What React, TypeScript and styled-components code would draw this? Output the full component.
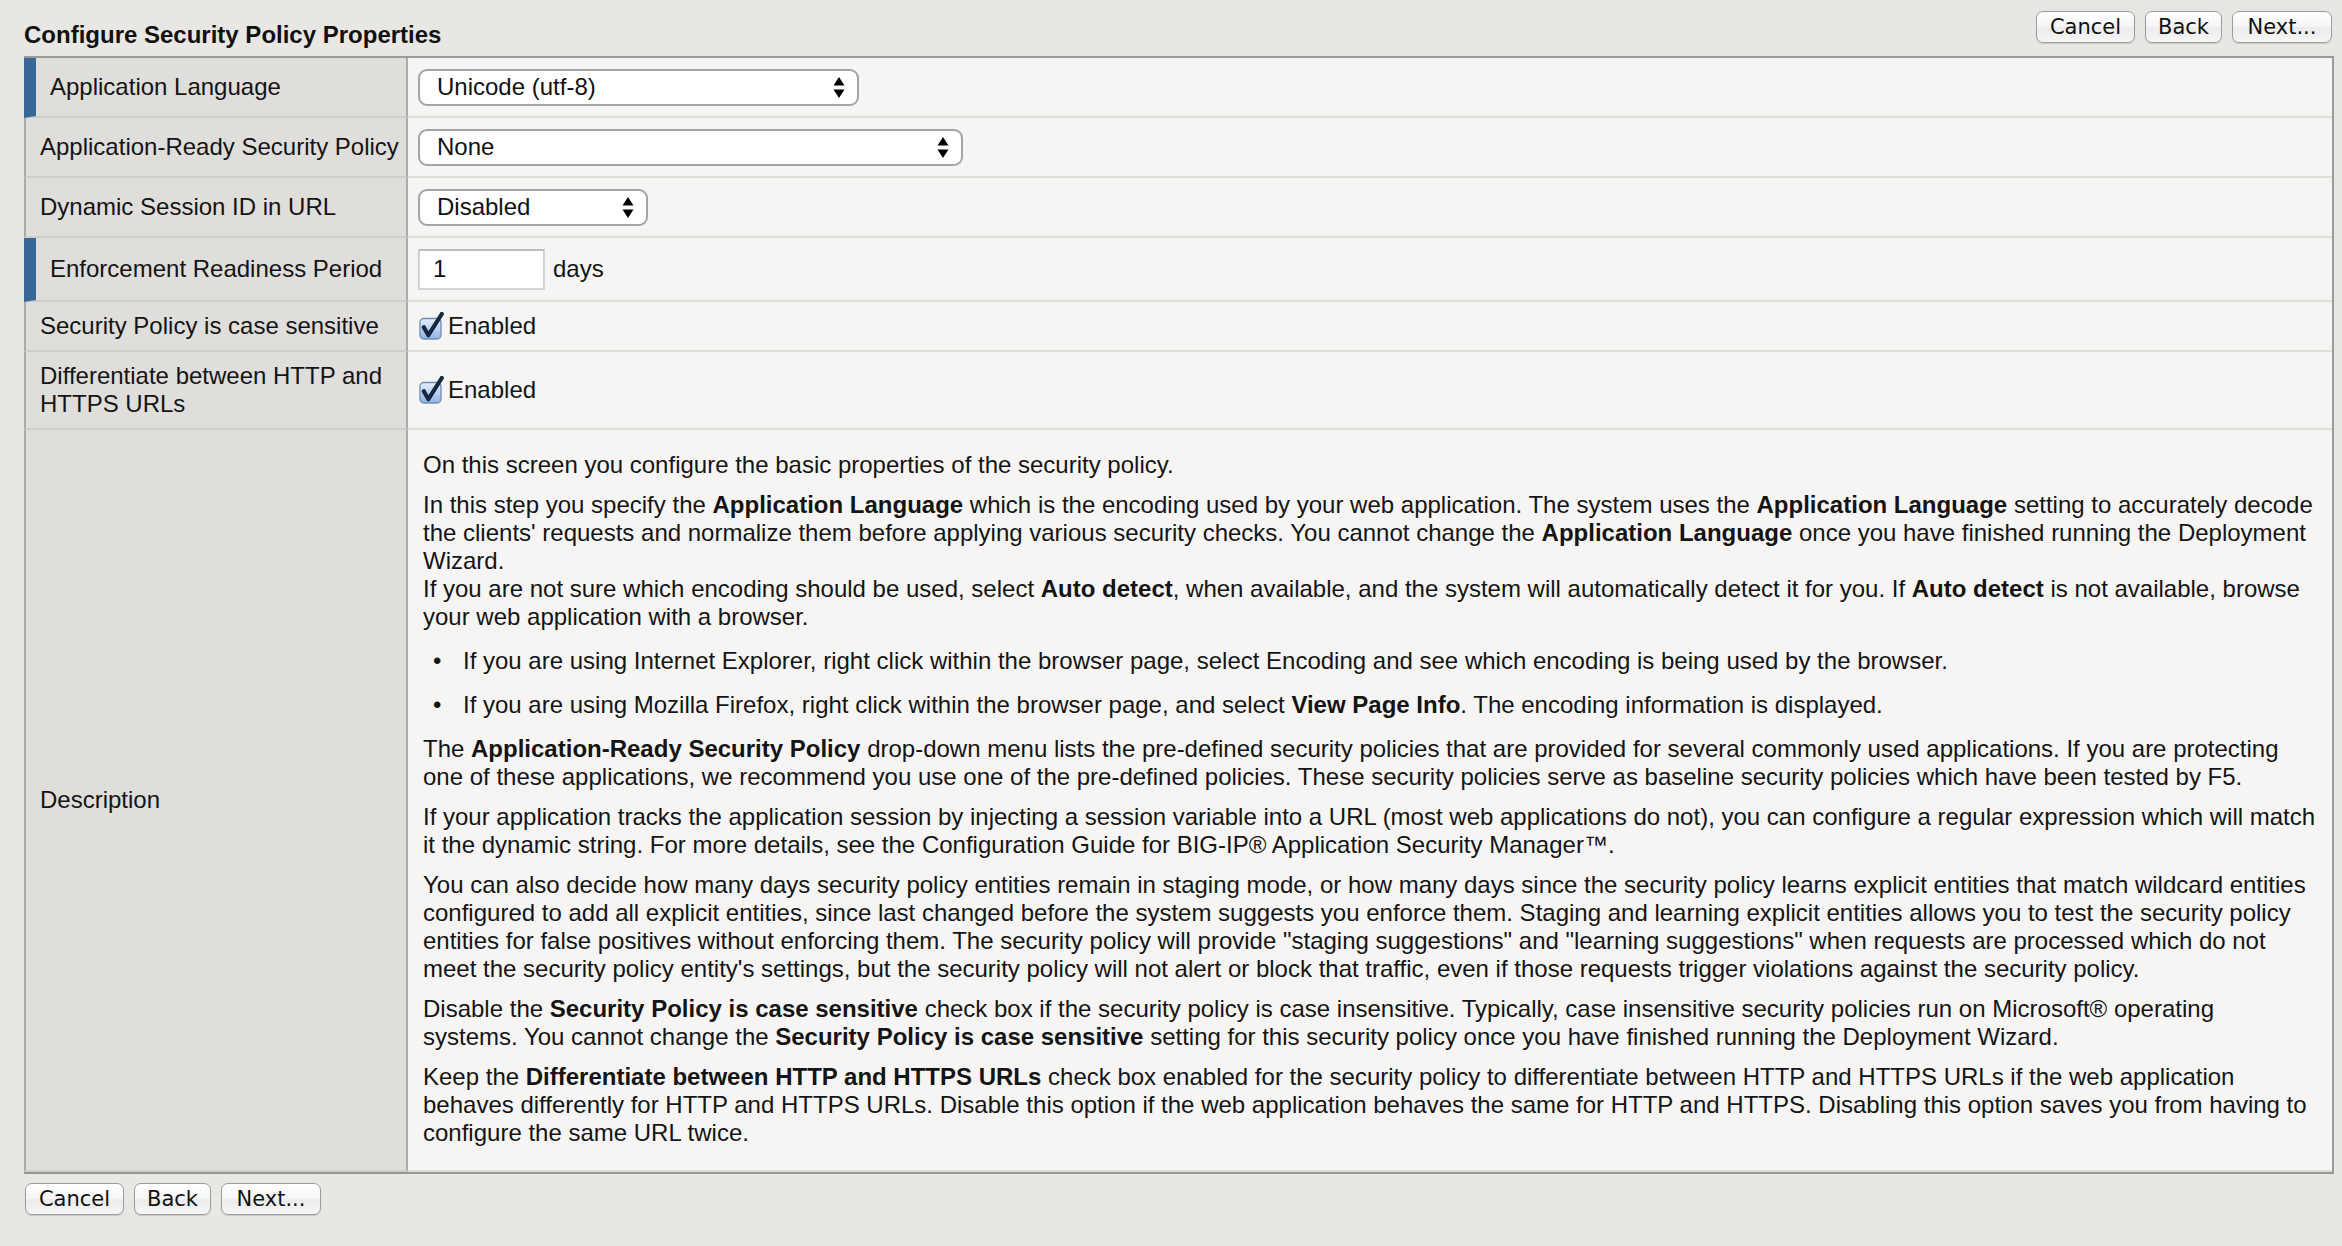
import React, { FC } from 'react'
import styled, { createGlobalStyle } from 'styled-components'

const GlobalStyle = createGlobalStyle`
  html, body {
    margin: 0;
    padding: 0;
  }

  body {
    background: #e8e7e4;
    color: #161616;
    font-family: 'Liberation Sans', Arial, Helvetica, sans-serif;
  }
`

const Page = styled.div`
  box-sizing: border-box;
  min-height: 1246px;
  padding: 11px 8px 0 24px;
`

const Header = styled.div`
  display: flex;
  justify-content: space-between;
  align-items: flex-end;
`

const Title = styled.h1`
  margin: 0 0 7px;
  font-size: 24px;
  line-height: 28px;
  font-weight: 700;
  color: #111;
`

const ButtonBar = styled.div<{ $top?: boolean }>`
  display: flex;
  gap: 10px;
  margin: ${({ $top }) => ($top ? '0 2px 13px 0' : '9px 0 0 1px')};
`

const Button = styled.button<{ $w: number }>`
  box-sizing: border-box;
  width: ${({ $w }) => $w}px;
  height: 32px;
  padding: 0;
  font-family: 'DejaVu Sans', 'Lucida Grande', sans-serif;
  font-size: 21px;
  color: #111;
  background: linear-gradient(#ffffff, #f5f5f5 50%, #ebebeb 52%, #f6f6f6);
  border: 1px solid #9c9c9c;
  border-radius: 7px;
  box-shadow: 0 1px 1px rgba(0, 0, 0, 0.14);
  cursor: pointer;
`

const Table = styled.div`
  background: #f6f5f3;
  border-top: 2px solid #9a9a9a;
  border-right: 2px solid #9a9a9a;
  border-bottom: 2px solid #979797;
`

const Row = styled.div<{ $h?: number }>`
  display: grid;
  grid-template-columns: 384px 1fr;
  min-height: ${({ $h }) => $h ?? 0}px;
`

const Label = styled.div<{ $marked?: boolean }>`
  display: flex;
  align-items: center;
  padding: 0 4px 0 14px;
  background: #dfdedb;
  border-left: ${({ $marked }) =>
    $marked ? '12px solid #386898' : '2px solid #a9a9a7'};
  border-right: 2px solid #acacaa;
  border-bottom: 2px solid #cfcecb;
  font-size: 24px;
  line-height: 28px;
  color: #141414;
`

const Value = styled.div`
  display: flex;
  align-items: center;
  padding: 0 10px;
  border-bottom: 2px solid #dfdedb;
  font-size: 24px;
  line-height: 28px;
  color: #141414;
`

const Select = styled.div<{ $w: number }>`
  box-sizing: border-box;
  display: flex;
  align-items: center;
  justify-content: space-between;
  width: ${({ $w }) => $w}px;
  height: 37px;
  padding: 0 12px 0 17px;
  background: #fff;
  border: 2px solid #a4a4a4;
  border-radius: 9px;
  font-size: 24px;
  color: #111;
`

const TextInput = styled.input`
  box-sizing: border-box;
  width: 127px;
  height: 41px;
  padding: 0 13px;
  background: #fff;
  border: 2px solid #d2d2d2;
  border-top-color: #bdbdbd;
  font-family: inherit;
  font-size: 24px;
  color: #111;
  outline: none;
`

const Unit = styled.span`
  margin-left: 8px;
`

const Check = styled.label`
  display: flex;
  align-items: center;
  gap: 3px;
  margin-left: 1px;
`

const Desc = styled.div`
  padding: 9px 4px 11px 15px;
  border-bottom: 2px solid #dfdedb;
  font-size: 24px;
  line-height: 28px;
  color: #141414;
`

const Para = styled.p`
  margin: 12px 0;
`

const List = styled.ul`
  margin: 0;
  padding: 0;
  list-style: none;
`

const Item = styled.li`
  display: flex;
  margin: 16px 0;
`

const Bullet = styled.span`
  flex: none;
  width: 30px;
  padding-left: 10px;
`

const Strong = styled.b`
  font-weight: 700;
`

const Arrows: FC = () => (
  <svg width='12' height='21' viewBox='0 0 12 21'>
    <path d='M6 0L11.5 8.5H0.5Z M0.5 12.5H11.5L6 21Z' fill='#000' />
  </svg>
)

const CheckIcon: FC<{ id: string }> = ({ id }) => (
  <svg width='26' height='28' viewBox='0 0 26 28'>
    <defs>
      <linearGradient id={id} x1='0' y1='0' x2='0' y2='1'>
        <stop offset='0' stopColor='#e6f0fb' />
        <stop offset='0.5' stopColor='#b9d4f2' />
        <stop offset='1' stopColor='#88b4e6' />
      </linearGradient>
    </defs>
    <rect
      x='1'
      y='6.5'
      width='21'
      height='20.5'
      rx='4'
      fill={`url(#${id})`}
      stroke='#6e8db2'
      strokeWidth='1.3'
    />
    <path
      d='M4.8 15.2L9.4 23.2L22.8 2'
      fill='none'
      stroke='#17273f'
      strokeWidth='4.2'
      strokeLinecap='round'
      strokeLinejoin='round'
    />
  </svg>
)

const Buttons: FC<{ top?: boolean }> = ({ top }) => (
  <ButtonBar $top={top}>
    <Button $w={99}>Cancel</Button>
    <Button $w={77}>Back</Button>
    <Button $w={100}>Next...</Button>
  </ButtonBar>
)

const App: FC = () => (
  <Page>
    <GlobalStyle />
    <Header>
      <Title>Configure Security Policy Properties</Title>
      <Buttons top />
    </Header>
    <Table>
      <Row $h={60}>
        <Label $marked>Application Language</Label>
        <Value>
          <Select $w={441}>
            Unicode (utf-8)
            <Arrows />
          </Select>
        </Value>
      </Row>
      <Row $h={60}>
        <Label>Application-Ready Security Policy</Label>
        <Value>
          <Select $w={545}>
            None
            <Arrows />
          </Select>
        </Value>
      </Row>
      <Row $h={60}>
        <Label>Dynamic Session ID in URL</Label>
        <Value>
          <Select $w={230}>
            Disabled
            <Arrows />
          </Select>
        </Value>
      </Row>
      <Row $h={64}>
        <Label $marked>Enforcement Readiness Period</Label>
        <Value>
          <TextInput defaultValue='1' />
          <Unit>days</Unit>
        </Value>
      </Row>
      <Row $h={50}>
        <Label>Security Policy is case sensitive</Label>
        <Value>
          <Check>
            <CheckIcon id='cb1' />
            Enabled
          </Check>
        </Value>
      </Row>
      <Row $h={78}>
        <Label>Differentiate between HTTP and HTTPS URLs</Label>
        <Value>
          <Check>
            <CheckIcon id='cb2' />
            Enabled
          </Check>
        </Value>
      </Row>
      <Row>
        <Label>Description</Label>
        <Desc>
          <Para>
            On this screen you configure the basic properties of the security
            policy.
          </Para>
          <Para>
            In this step you specify the <Strong>Application Language</Strong>{' '}
            which is the encoding used by your web application. The system uses
            the <Strong>Application Language</Strong> setting to accurately
            decode
            <br />
            the clients' requests and normalize them before applying various
            security checks. You cannot change the{' '}
            <Strong>Application Language</Strong> once you have finished running
            the Deployment
            <br />
            Wizard.
            <br />
            If you are not sure which encoding should be used, select{' '}
            <Strong>Auto detect</Strong>, when available, and the system will
            automatically detect it for you. If <Strong>Auto detect</Strong> is
            not available, browse
            <br />
            your web application with a browser.
          </Para>
          <List>
            <Item>
              <Bullet>•</Bullet>
              <span>
                If you are using Internet Explorer, right click within the
                browser page, select Encoding and see which encoding is being
                used by the browser.
              </span>
            </Item>
            <Item>
              <Bullet>•</Bullet>
              <span>
                If you are using Mozilla Firefox, right click within the browser
                page, and select <Strong>View Page Info</Strong>. The encoding
                information is displayed.
              </span>
            </Item>
          </List>
          <Para>
            The <Strong>Application-Ready Security Policy</Strong> drop-down
            menu lists the pre-defined security policies that are provided for
            several commonly used applications. If you are protecting
            <br />
            one of these applications, we recommend you use one of the
            pre-defined policies. These security policies serve as baseline
            security policies which have been tested by F5.
          </Para>
          <Para>
            If your application tracks the application session by injecting a
            session variable into a URL (most web applications do not), you can
            configure a regular expression which will match
            <br />
            it the dynamic string. For more details, see the Configuration Guide
            for BIG-IP® Application Security Manager™.
          </Para>
          <Para>
            You can also decide how many days security policy entities remain in
            staging mode, or how many days since the security policy learns
            explicit entities that match wildcard entities
            <br />
            configured to add all explicit entities, since last changed before
            the system suggests you enforce them. Staging and learning explicit
            entities allows you to test the security policy
            <br />
            entities for false positives without enforcing them. The security
            policy will provide "staging suggestions" and "learning suggestions"
            when requests are processed which do not
            <br />
            meet the security policy entity's settings, but the security policy
            will not alert or block that traffic, even if those requests trigger
            violations against the security policy.
          </Para>
          <Para>
            Disable the <Strong>Security Policy is case sensitive</Strong> check
            box if the security policy is case insensitive. Typically, case
            insensitive security policies run on Microsoft® operating
            <br />
            systems. You cannot change the{' '}
            <Strong>Security Policy is case sensitive</Strong> setting for this
            security policy once you have finished running the Deployment
            Wizard.
          </Para>
          <Para>
            Keep the <Strong>Differentiate between HTTP and HTTPS URLs</Strong>{' '}
            check box enabled for the security policy to differentiate between
            HTTP and HTTPS URLs if the web application
            <br />
            behaves differently for HTTP and HTTPS URLs. Disable this option if
            the web application behaves the same for HTTP and HTTPS. Disabling
            this option saves you from having to
            <br />
            configure the same URL twice.
          </Para>
        </Desc>
      </Row>
    </Table>
    <Buttons />
  </Page>
)

export default App
